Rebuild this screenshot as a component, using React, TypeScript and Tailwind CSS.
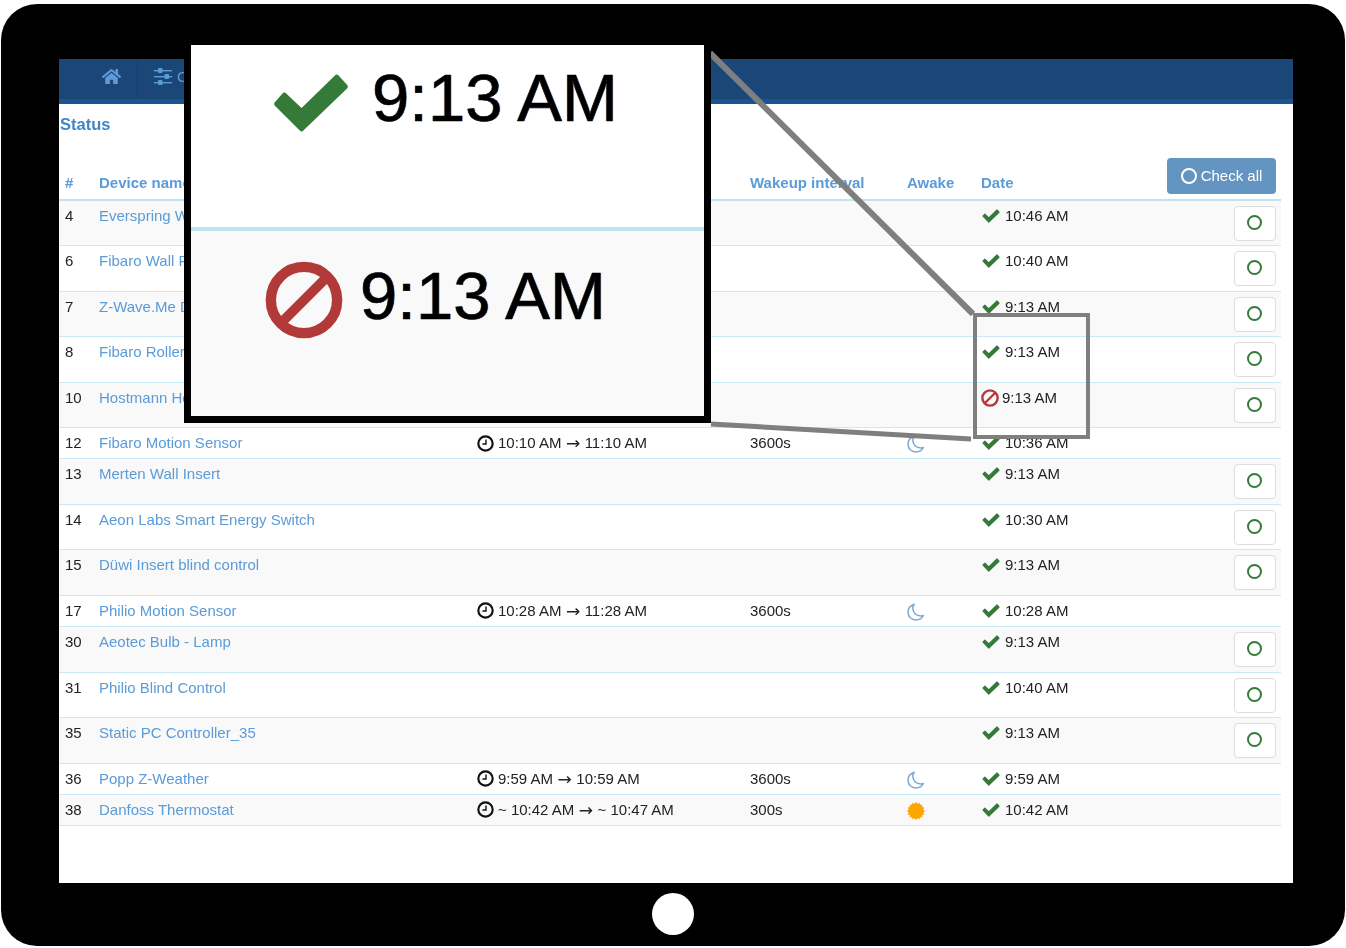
import { FaHome } from "react-icons/fa";

type Row = { id: number; name: string; from?: string; to?: string; wake?: string; awake?: "moon" | "sun"; date: string; bad?: boolean };

const rows: Row[] = [
  { id: 4, name: "Everspring Wall Plug", date: "10:46 AM" },
  { id: 6, name: "Fibaro Wall Plug", date: "10:40 AM" },
  { id: 7, name: "Z-Wave.Me Dimmer", date: "9:13 AM" },
  { id: 8, name: "Fibaro Roller Shutter", date: "9:13 AM" },
  { id: 10, name: "Hostmann Heating", date: "9:13 AM", bad: true },
  { id: 12, name: "Fibaro Motion Sensor", from: "10:10 AM", to: "11:10 AM", wake: "3600s", awake: "moon", date: "10:36 AM" },
  { id: 13, name: "Merten Wall Insert", date: "9:13 AM" },
  { id: 14, name: "Aeon Labs Smart Energy Switch", date: "10:30 AM" },
  { id: 15, name: "Düwi Insert blind control", date: "9:13 AM" },
  { id: 17, name: "Philio Motion Sensor", from: "10:28 AM", to: "11:28 AM", wake: "3600s", awake: "moon", date: "10:28 AM" },
  { id: 30, name: "Aeotec Bulb - Lamp", date: "9:13 AM" },
  { id: 31, name: "Philio Blind Control", date: "10:40 AM" },
  { id: 35, name: "Static PC Controller_35", date: "9:13 AM" },
  { id: 36, name: "Popp Z-Weather", from: "9:59 AM", to: "10:59 AM", wake: "3600s", awake: "moon", date: "9:59 AM" },
  { id: 38, name: "Danfoss Thermostat", from: "~ 10:42 AM", to: "~ 10:47 AM", wake: "300s", awake: "sun", date: "10:42 AM" },
];

function Clock() {
  return (
    <svg viewBox="0 0 18 18" className="w-[17px] h-[17px] mr-[4px] shrink-0">
      <circle cx="9" cy="9" r="7.6" fill="none" stroke="#111" strokeWidth="2.3" />
      <path d="M9.5 4.8V9.6H5.8" fill="none" stroke="#111" strokeWidth="1.5" />
    </svg>
  );
}

function Moon() {
  return (
    <svg viewBox="0 0 18 18" className="w-[18px] h-[18px]">
      <path d="M7.2 1.2C3.6 2.4 1 5.6 1 9.2c0 4.4 3.6 7.8 8 7.8 3.2 0 6-1.8 7.4-4.5-.9.3-1.8.4-2.7.4-4.5 0-7.9-3.4-7.9-7.6 0-1.4.5-2.8 1.4-4.1Z" fill="none" stroke="#7ba8d2" strokeWidth="1.5" strokeLinejoin="round" />
    </svg>
  );
}

const sunPoints = Array.from({ length: 32 }, (_, i) => {
  const a = (i * Math.PI) / 16;
  const r = i % 2 === 0 ? 9 : 7.4;
  return `${(9 + r * Math.cos(a)).toFixed(2)},${(9 + r * Math.sin(a)).toFixed(2)}`;
}).join(" ");

function Sun() {
  return (
    <svg viewBox="0 0 18 18" className="w-[18px] h-[18px]">
      <polygon points={sunPoints} fill="#ffa500" />
    </svg>
  );
}

function Sliders() {
  return (
    <svg viewBox="0 0 18 17" className="w-[18px] h-[17px]" fill="currentColor">
      <rect x="0" y="2" width="18" height="1.4" />
      <rect x="0" y="8" width="18" height="1.4" />
      <rect x="0" y="14" width="18" height="1.4" />
      <rect x="4" y="0" width="4.5" height="5" rx="1" />
      <rect x="10.5" y="6" width="4.5" height="5" rx="1" />
      <rect x="4" y="12" width="4.5" height="5" rx="1" />
    </svg>
  );
}

function Check({ className }: { className: string }) {
  return (
    <svg viewBox="0 0 18 14" className={className}>
      <polygon points="1,7.2 2.8,5.2 6.8,9 15,1 17,3.2 6.8,13" fill="#357a38" stroke="#357a38" strokeWidth="1.2" strokeLinejoin="round" />
    </svg>
  );
}

function Ban({ className }: { className: string }) {
  return (
    <svg viewBox="0 0 24 24" className={className}>
      <circle cx="12" cy="12" r="10.2" fill="none" stroke="#b13a38" strokeWidth="3.2" />
      <path d="M5 19 19 5" fill="none" stroke="#b13a38" strokeWidth="3" />
    </svg>
  );
}

export default function App() {
  return (
    <div className="relative w-[1346px] h-[948px] bg-white overflow-hidden [font-family:'Liberation_Sans',Arial,sans-serif]">
      <div className="ml-px mt-1 w-[1344px] h-[942px] bg-black rounded-[36px] pt-[55px] pl-[58px]">
        <div className="w-[1234px] h-[824px] bg-white flex flex-col [filter:blur(0.3px)]">
          <nav className="h-[45px] bg-[#1a4678] border-b-[5px] border-[#1c5490] flex">
            <div className="w-[79px] border-r border-[#153f70] flex justify-end pr-[16px] pt-[9px] text-[#5c9bd6]">
              <FaHome className="w-[19px] h-[17px]" />
            </div>
            <div className="flex items-start gap-[5px] pl-[16px] pt-[9px] text-[#5c9bd6]">
              <Sliders />
              <span className="text-[15px] leading-[17px]">Configuration</span>
            </div>
          </nav>
          <h1 className="text-[16.5px] leading-5 font-bold text-[#3f87c8] mt-[10px] ml-px">Status</h1>
          <div className="flex-1 pr-3 mt-[26px]">
            <table className="w-full table-fixed border-collapse text-[15px] leading-[18px] text-[#222]">
              <colgroup>
                <col className="w-[40px]" />
                <col className="w-[378px]" />
                <col className="w-[273px]" />
                <col className="w-[157px]" />
                <col className="w-[74px]" />
                <col className="w-[253px]" />
                <col />
              </colgroup>
              <thead>
                <tr className="h-[40px] border-b-2 border-[#bfe3f2] text-[#5b9bd8] font-bold text-left align-bottom">
                  <th className="pl-[6px] pb-[7px]">#</th>
                  <th className="pb-[7px]">Device name</th>
                  <th className="pb-[7px]">Awake interval</th>
                  <th className="pb-[7px]">Wakeup interval</th>
                  <th className="pb-[7px]">Awake</th>
                  <th className="pb-[7px]">Date</th>
                  <th className="relative pb-[7px]">
                    <button className="absolute right-[5px] bottom-[5px] w-[109px] h-[36px] rounded-[4px] bg-[#6495c2] text-white font-normal flex items-center justify-center gap-[4px]">
                      <span className="w-[16px] h-[16px] rounded-full border-2 border-white" />
                      Check all
                    </button>
                  </th>
                </tr>
              </thead>
              <tbody>
                {rows.map((r, i) => (
                  <tr key={r.id} className={`border-b border-[#c9e8f8] align-top ${i % 2 === 0 ? "bg-[#f9f9f9]" : "bg-white"}`}>
                    <td className={`pl-[6px] pt-[6px] ${r.from ? "h-[31.3px]" : "h-[45.5px]"}`}>{r.id}</td>
                    <td className="pt-[6px] text-[#5b9bd8] whitespace-nowrap">{r.name}</td>
                    <td className="pt-[6px] whitespace-nowrap">
                      {r.from && (
                        <span className="flex items-center">
                          <Clock />
                          {r.from}
                          <span className="mx-[4.5px] [font-family:'DejaVu_Sans',sans-serif] text-[17px] leading-[18px]">→</span>
                          {r.to}
                        </span>
                      )}
                    </td>
                    <td className="pt-[6px]">{r.wake}</td>
                    <td className="pt-[7px]">
                      {r.awake === "moon" && <Moon />}
                      {r.awake === "sun" && <Sun />}
                    </td>
                    <td className="pt-[6px] whitespace-nowrap">
                      <span className="flex items-center pl-px">
                        {r.bad ? (
                          <Ban className="w-[18px] h-[18px] mr-[3px] -ml-px" />
                        ) : (
                          <Check className="w-[18px] h-[14px] mr-[5px]" />
                        )}
                        {r.date}
                      </span>
                    </td>
                    <td className="relative">
                      {!r.from && (
                        <div className="absolute right-[5px] top-[5px] w-[42px] h-[35px] pr-[2px] pb-[2px] rounded-[4px] border border-[#dddddd] bg-white flex items-center justify-center">
                          <span className="w-[15px] h-[15px] rounded-full border-2 border-[#357a38]" />
                        </div>
                      )}
                    </td>
                  </tr>
                ))}
              </tbody>
            </table>
          </div>
        </div>
        <div className="absolute left-[652px] top-[893px] w-[42px] h-[42px] rounded-full bg-white" />
      </div>

      <svg className="absolute inset-0 w-[1346px] h-[948px] pointer-events-none" viewBox="0 0 1346 948">
        <path d="M710 53 973 314" fill="none" stroke="#7f7f7f" strokeWidth="6" />
        <path d="M711 424 971 439" fill="none" stroke="#7f7f7f" strokeWidth="5" />
      </svg>
      <div className="absolute left-[973px] top-[313px] w-[117px] h-[126px] border-4 border-[#7f7f7f]" />

      <div className="absolute left-[184px] top-[38px] w-[527px] h-[385px] border-[7px] border-black bg-white flex flex-col text-black">
        <div className="h-[182px] flex items-start pl-[81px] pt-[14px] gap-[22px] text-[67px] leading-[78px] [-webkit-text-stroke:0.6px_black] [text-shadow:1px_0_0_rgba(90,160,255,0.45),-1px_0_0_rgba(190,110,30,0.3)] [filter:blur(0.7px)]">
          <Check className="w-[78px] h-[60px] mt-[14px]" />
          <span>9:13 AM</span>
        </div>
        <div className="flex-1 bg-[#f9f9f9] border-t-4 border-[#bfe3f2] flex items-start pl-[74px] pt-[26px] gap-[17px] text-[67px] leading-[78px] [-webkit-text-stroke:0.6px_black] [text-shadow:1px_0_0_rgba(90,160,255,0.45),-1px_0_0_rgba(190,110,30,0.3)] [filter:blur(0.7px)]">
          <Ban className="w-[78px] h-[78px] mt-[4px]" />
          <span>9:13 AM</span>
        </div>
      </div>
    </div>
  );
}
